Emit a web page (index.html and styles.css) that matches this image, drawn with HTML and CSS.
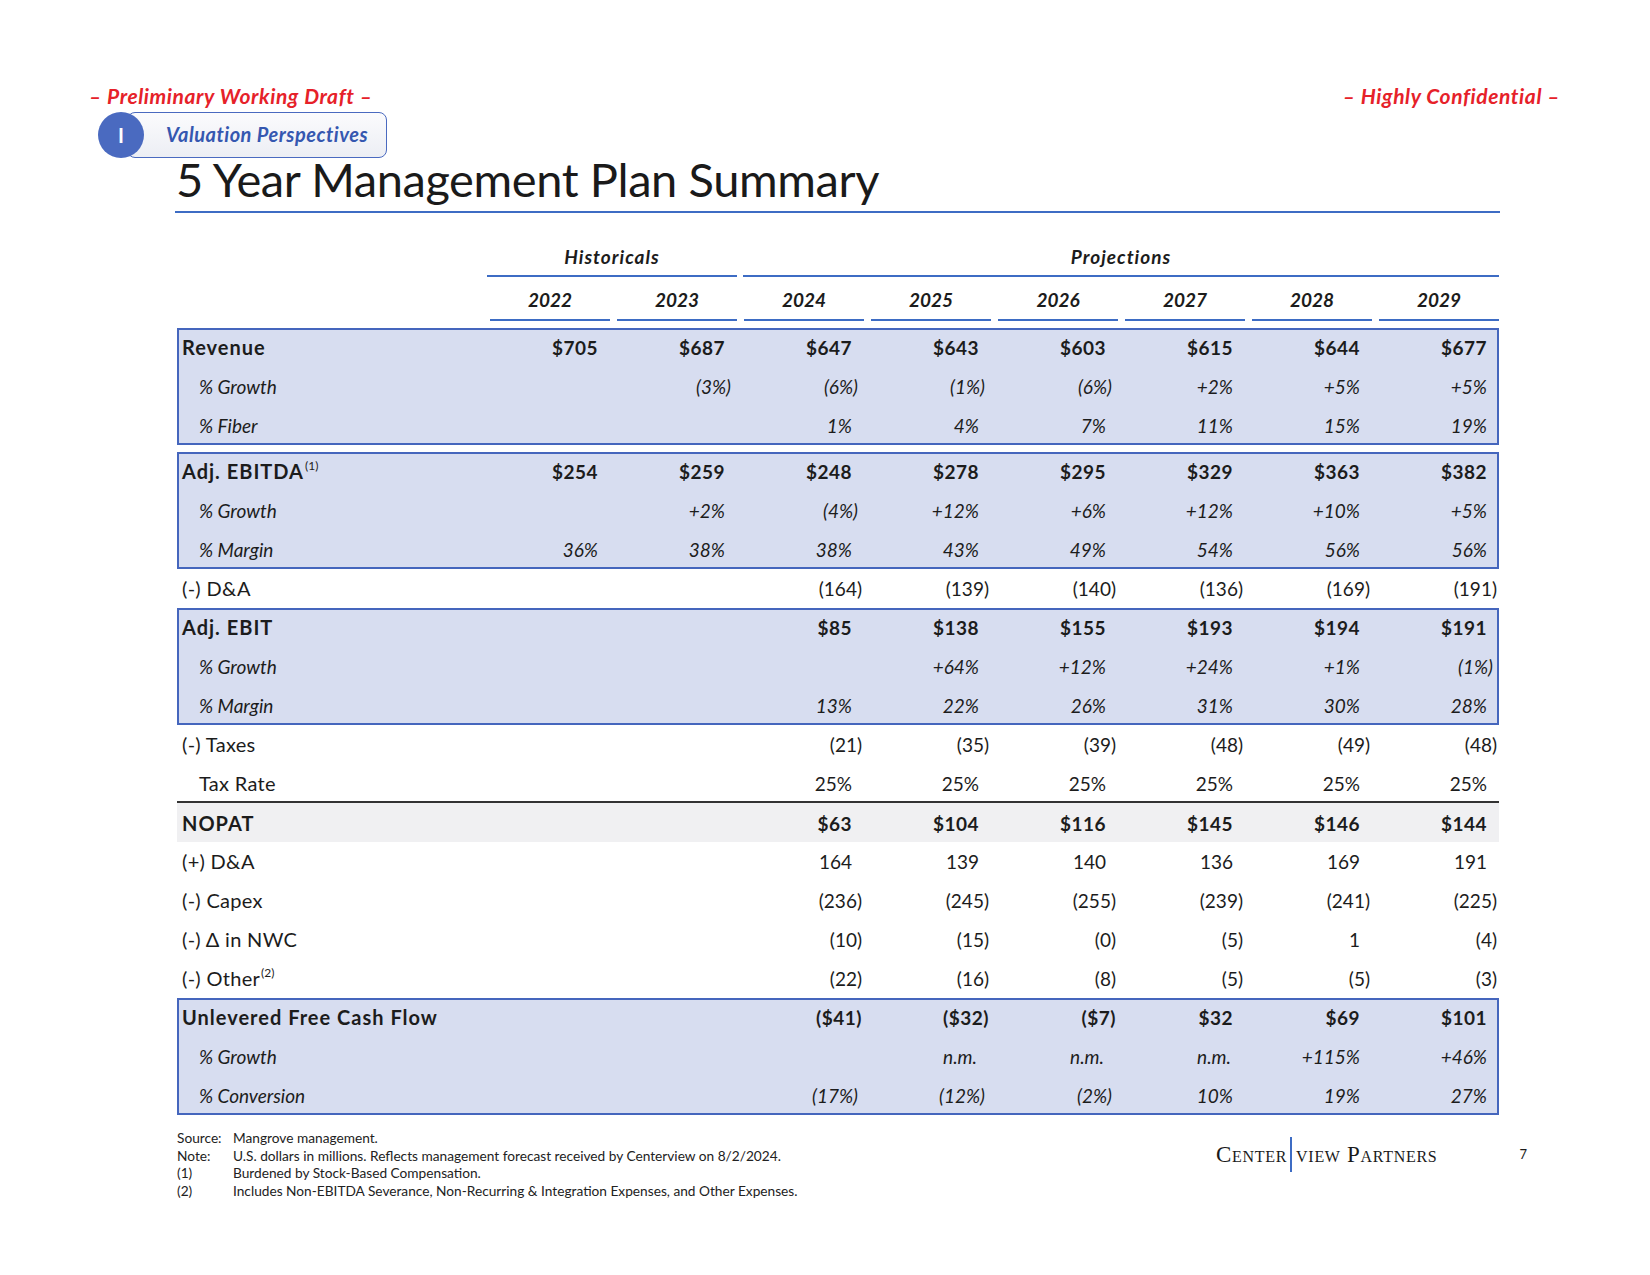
FILE: index.html
```html
<!DOCTYPE html>
<html lang="en">
<head>
<meta charset="utf-8">
<title>5 Year Management Plan Summary</title>
<link rel="stylesheet" href="styles.css">
</head>
<body>
<div class="page">
  <div class="topbar">
    <span>– Preliminary Working Draft –</span>
    <span>– Highly Confidential –</span>
  </div>
  <div class="tab">
    <span class="tab-num">I</span>
    <span class="tab-label">Valuation Perspectives</span>
  </div>
  <h1 class="title">5 Year Management Plan Summary</h1>

  <div class="table">
    <div class="grp-row">
      <div></div>
      <div class="grp hist">Historicals</div>
      <div class="grp proj">Projections</div>
    </div>
    <div class="yr-row">
      <div></div>
      <div class="yr">2022</div><div class="yr">2023</div><div class="yr">2024</div><div class="yr">2025</div>
      <div class="yr">2026</div><div class="yr">2027</div><div class="yr">2028</div><div class="yr">2029</div>
    </div>

    <div class="box first">
      <div class="row b">
        <div class="lbl">Revenue</div>
        <div class="c">$705</div><div class="c">$687</div><div class="c">$647</div><div class="c">$643</div>
        <div class="c">$603</div><div class="c">$615</div><div class="c">$644</div><div class="c">$677</div>
      </div>
      <div class="row sub">
        <div class="lbl">% Growth</div>
        <div class="c"></div><div class="c ip">(3%)</div><div class="c ip">(6%)</div><div class="c ip">(1%)</div>
        <div class="c ip">(6%)</div><div class="c">+2%</div><div class="c">+5%</div><div class="c">+5%</div>
      </div>
      <div class="row sub">
        <div class="lbl">% Fiber</div>
        <div class="c"></div><div class="c"></div><div class="c">1%</div><div class="c">4%</div>
        <div class="c">7%</div><div class="c">11%</div><div class="c">15%</div><div class="c">19%</div>
      </div>
    </div>

    <div class="box gap">
      <div class="row b">
        <div class="lbl">Adj. EBITDA<sup>(1)</sup></div>
        <div class="c">$254</div><div class="c">$259</div><div class="c">$248</div><div class="c">$278</div>
        <div class="c">$295</div><div class="c">$329</div><div class="c">$363</div><div class="c">$382</div>
      </div>
      <div class="row sub">
        <div class="lbl">% Growth</div>
        <div class="c"></div><div class="c">+2%</div><div class="c ip">(4%)</div><div class="c">+12%</div>
        <div class="c">+6%</div><div class="c">+12%</div><div class="c">+10%</div><div class="c">+5%</div>
      </div>
      <div class="row sub">
        <div class="lbl">% Margin</div>
        <div class="c">36%</div><div class="c">38%</div><div class="c">38%</div><div class="c">43%</div>
        <div class="c">49%</div><div class="c">54%</div><div class="c">56%</div><div class="c">56%</div>
      </div>
    </div>

    <div class="row">
      <div class="lbl">(-) D&amp;A</div>
      <div class="c"></div><div class="c"></div><div class="c ng">(164)</div><div class="c ng">(139)</div>
      <div class="c ng">(140)</div><div class="c ng">(136)</div><div class="c ng">(169)</div><div class="c ng">(191)</div>
    </div>

    <div class="box">
      <div class="row b">
        <div class="lbl">Adj. EBIT</div>
        <div class="c"></div><div class="c"></div><div class="c">$85</div><div class="c">$138</div>
        <div class="c">$155</div><div class="c">$193</div><div class="c">$194</div><div class="c">$191</div>
      </div>
      <div class="row sub">
        <div class="lbl">% Growth</div>
        <div class="c"></div><div class="c"></div><div class="c"></div><div class="c">+64%</div>
        <div class="c">+12%</div><div class="c">+24%</div><div class="c">+1%</div><div class="c ip">(1%)</div>
      </div>
      <div class="row sub">
        <div class="lbl">% Margin</div>
        <div class="c"></div><div class="c"></div><div class="c">13%</div><div class="c">22%</div>
        <div class="c">26%</div><div class="c">31%</div><div class="c">30%</div><div class="c">28%</div>
      </div>
    </div>

    <div class="row">
      <div class="lbl">(-) Taxes</div>
      <div class="c"></div><div class="c"></div><div class="c ng">(21)</div><div class="c ng">(35)</div>
      <div class="c ng">(39)</div><div class="c ng">(48)</div><div class="c ng">(49)</div><div class="c ng">(48)</div>
    </div>
    <div class="row">
      <div class="lbl ind">Tax Rate</div>
      <div class="c"></div><div class="c"></div><div class="c">25%</div><div class="c">25%</div>
      <div class="c">25%</div><div class="c">25%</div><div class="c">25%</div><div class="c">25%</div>
    </div>

    <div class="row b nopat">
      <div class="lbl">NOPAT</div>
      <div class="c"></div><div class="c"></div><div class="c">$63</div><div class="c">$104</div>
      <div class="c">$116</div><div class="c">$145</div><div class="c">$146</div><div class="c">$144</div>
    </div>
    <div class="row">
      <div class="lbl">(+) D&amp;A</div>
      <div class="c"></div><div class="c"></div><div class="c">164</div><div class="c">139</div>
      <div class="c">140</div><div class="c">136</div><div class="c">169</div><div class="c">191</div>
    </div>
    <div class="row">
      <div class="lbl">(-) Capex</div>
      <div class="c"></div><div class="c"></div><div class="c ng">(236)</div><div class="c ng">(245)</div>
      <div class="c ng">(255)</div><div class="c ng">(239)</div><div class="c ng">(241)</div><div class="c ng">(225)</div>
    </div>
    <div class="row">
      <div class="lbl">(-) Δ in NWC</div>
      <div class="c"></div><div class="c"></div><div class="c ng">(10)</div><div class="c ng">(15)</div>
      <div class="c ng">(0)</div><div class="c ng">(5)</div><div class="c">1</div><div class="c ng">(4)</div>
    </div>
    <div class="row">
      <div class="lbl">(-) Other<sup>(2)</sup></div>
      <div class="c"></div><div class="c"></div><div class="c ng">(22)</div><div class="c ng">(16)</div>
      <div class="c ng">(8)</div><div class="c ng">(5)</div><div class="c ng">(5)</div><div class="c ng">(3)</div>
    </div>

    <div class="box">
      <div class="row b">
        <div class="lbl">Unlevered Free Cash Flow</div>
        <div class="c"></div><div class="c"></div><div class="c ng">($41)</div><div class="c ng">($32)</div>
        <div class="c ng">($7)</div><div class="c">$32</div><div class="c">$69</div><div class="c">$101</div>
      </div>
      <div class="row sub">
        <div class="lbl">% Growth</div>
        <div class="c"></div><div class="c"></div><div class="c"></div><div class="c nm">n.m.</div>
        <div class="c nm">n.m.</div><div class="c nm">n.m.</div><div class="c">+115%</div><div class="c">+46%</div>
      </div>
      <div class="row sub">
        <div class="lbl">% Conversion</div>
        <div class="c"></div><div class="c"></div><div class="c ip">(17%)</div><div class="c ip">(12%)</div>
        <div class="c ip">(2%)</div><div class="c">10%</div><div class="c">19%</div><div class="c">27%</div>
      </div>
    </div>
  </div>

  <div class="footer">
    <div class="notes">
      <span class="nl">Source:</span><span>Mangrove management.</span>
      <span class="nl">Note:</span><span>U.S. dollars in millions. Reflects management forecast received by Centerview on 8/2/2024.</span>
      <span class="nl">(1)</span><span>Burdened by Stock-Based Compensation.</span>
      <span class="nl">(2)</span><span>Includes Non-EBITDA Severance, Non-Recurring &amp; Integration Expenses, and Other Expenses.</span>
    </div>
    <div class="logo"><span class="lw">Center</span><span class="bar"></span><span class="lw">view Partners</span></div>
    <div class="pnum">7</div>
  </div>
</div>
</body>
</html>
```

FILE: styles.css
```css
* { box-sizing: border-box; margin: 0; padding: 0; }
body { margin: 0; background: #fff; font-family: Lato, "Open Sans", sans-serif; color: #1c1c1c; }
.page { width: 1650px; height: 1275px; padding-top: 84px; }

.topbar {
  display: flex; justify-content: space-between;
  padding: 0 90px 0 89px; height: 24px; line-height: 24px;
  color: #e62129; font-weight: 700; font-style: italic; font-size: 21px; letter-spacing: 0.6px;
}

.tab { display: flex; align-items: center; margin: 4px 0 0 98px; height: 46px; }
.tab-num {
  position: relative; z-index: 1;
  width: 46px; height: 46px; border-radius: 50%;
  background: #4a6ac0; color: #fff; font-weight: 700; font-size: 20px;
  display: flex; align-items: center; justify-content: center;
}
.tab-label {
  margin-left: -17px; width: 260px; height: 46px;
  border: 1.5px solid #4a6ac0; border-radius: 8px;
  background: linear-gradient(#fbfbfd, #eceef4);
  padding-left: 38px; line-height: 43px;
  color: #3557b0; font-weight: 700; font-style: italic; font-size: 20px; letter-spacing: 0.5px;
}

.title {
  margin: -3px 0 0 175px; width: 1325px;
  font-size: 47px; line-height: 49px; font-weight: 400; color: #1a1a1a; letter-spacing: -0.4px;
  padding: 0 0 7px 1px; border-bottom: 2px solid #3d6cc4;
}

.table { margin-left: 177px; width: 1322px; }
.grp-row { display: grid; grid-template-columns: 306px 254px 762px; }
.grp {
  text-align: center; font-weight: 700; font-style: italic; font-size: 19px; letter-spacing: 1px;
  padding-top: 33px; line-height: 22px; padding-bottom: 7px;
  border-bottom: 2px solid #3d6cc4;
}
.grp.hist { margin-left: 4px; }
.grp.proj { margin-left: 6px; }

.yr-row { display: grid; grid-template-columns: 306px repeat(8, 127px); font-size: 19px; line-height: 22px; }
.yr {
  margin-left: 7px; text-align: center; font-weight: 700; font-style: italic;
  padding: 12px 0 8px; border-bottom: 2px solid #3d6cc4;
}

.row {
  display: grid; grid-template-columns: 306px repeat(8, 127px);
  height: 39px; line-height: 39px; font-size: 19px;
}

.box { background: #d7ddf0; box-shadow: inset 0 0 0 2px #4566bd; }
.box.first { margin-top: 7px; }
.box.gap { margin-top: 7px; }

.lbl { padding-left: 5px; white-space: nowrap; font-size: 20px; letter-spacing: 0.3px; }
.row.sub .lbl { padding-left: 22px; font-size: 19px; letter-spacing: 0; }
.lbl.ind { padding-left: 22px; }
.row.sub { font-style: italic; }
.row.b { font-weight: 700; }
.row.b .c { letter-spacing: 0.5px; }
.row.b .lbl { font-size: 20px; letter-spacing: 1px; }
sup { font-size: 12px; font-weight: 400; letter-spacing: 0; vertical-align: 0; position: relative; top: -9px; margin-left: 1px; }

.c { text-align: right; padding-right: 12px; white-space: nowrap; }
.c.ng { padding-right: 2px; }
.c.ip { padding-right: 6px; }
.c.nm { padding-right: 14px; }

.nopat {
  height: 41px; margin-top: -2px; padding-top: 2px;
  border-top: 2px solid #333; background: #f0f0f2;
  line-height: 37px;
}

.footer { display: flex; align-items: flex-start; margin: 14px 0 0 177px; width: 1350px; }
.notes {
  display: grid; grid-template-columns: 56px auto;
  font-size: 13.7px; line-height: 17.5px; color: #222;
}
.logo {
  margin: 8px 0 0 auto; display: flex; align-items: center;
  font-family: "Liberation Serif", "DejaVu Serif", serif; font-variant: small-caps;
  font-size: 23px; letter-spacing: 0.7px; color: #1a1a1a;
}
.bar { width: 2px; height: 35px; background: #3d6cc4; margin: 0 4px 0 3px; }
.pnum { margin: 18px 0 0 82px; font-size: 13px; line-height: 15px; }
```
